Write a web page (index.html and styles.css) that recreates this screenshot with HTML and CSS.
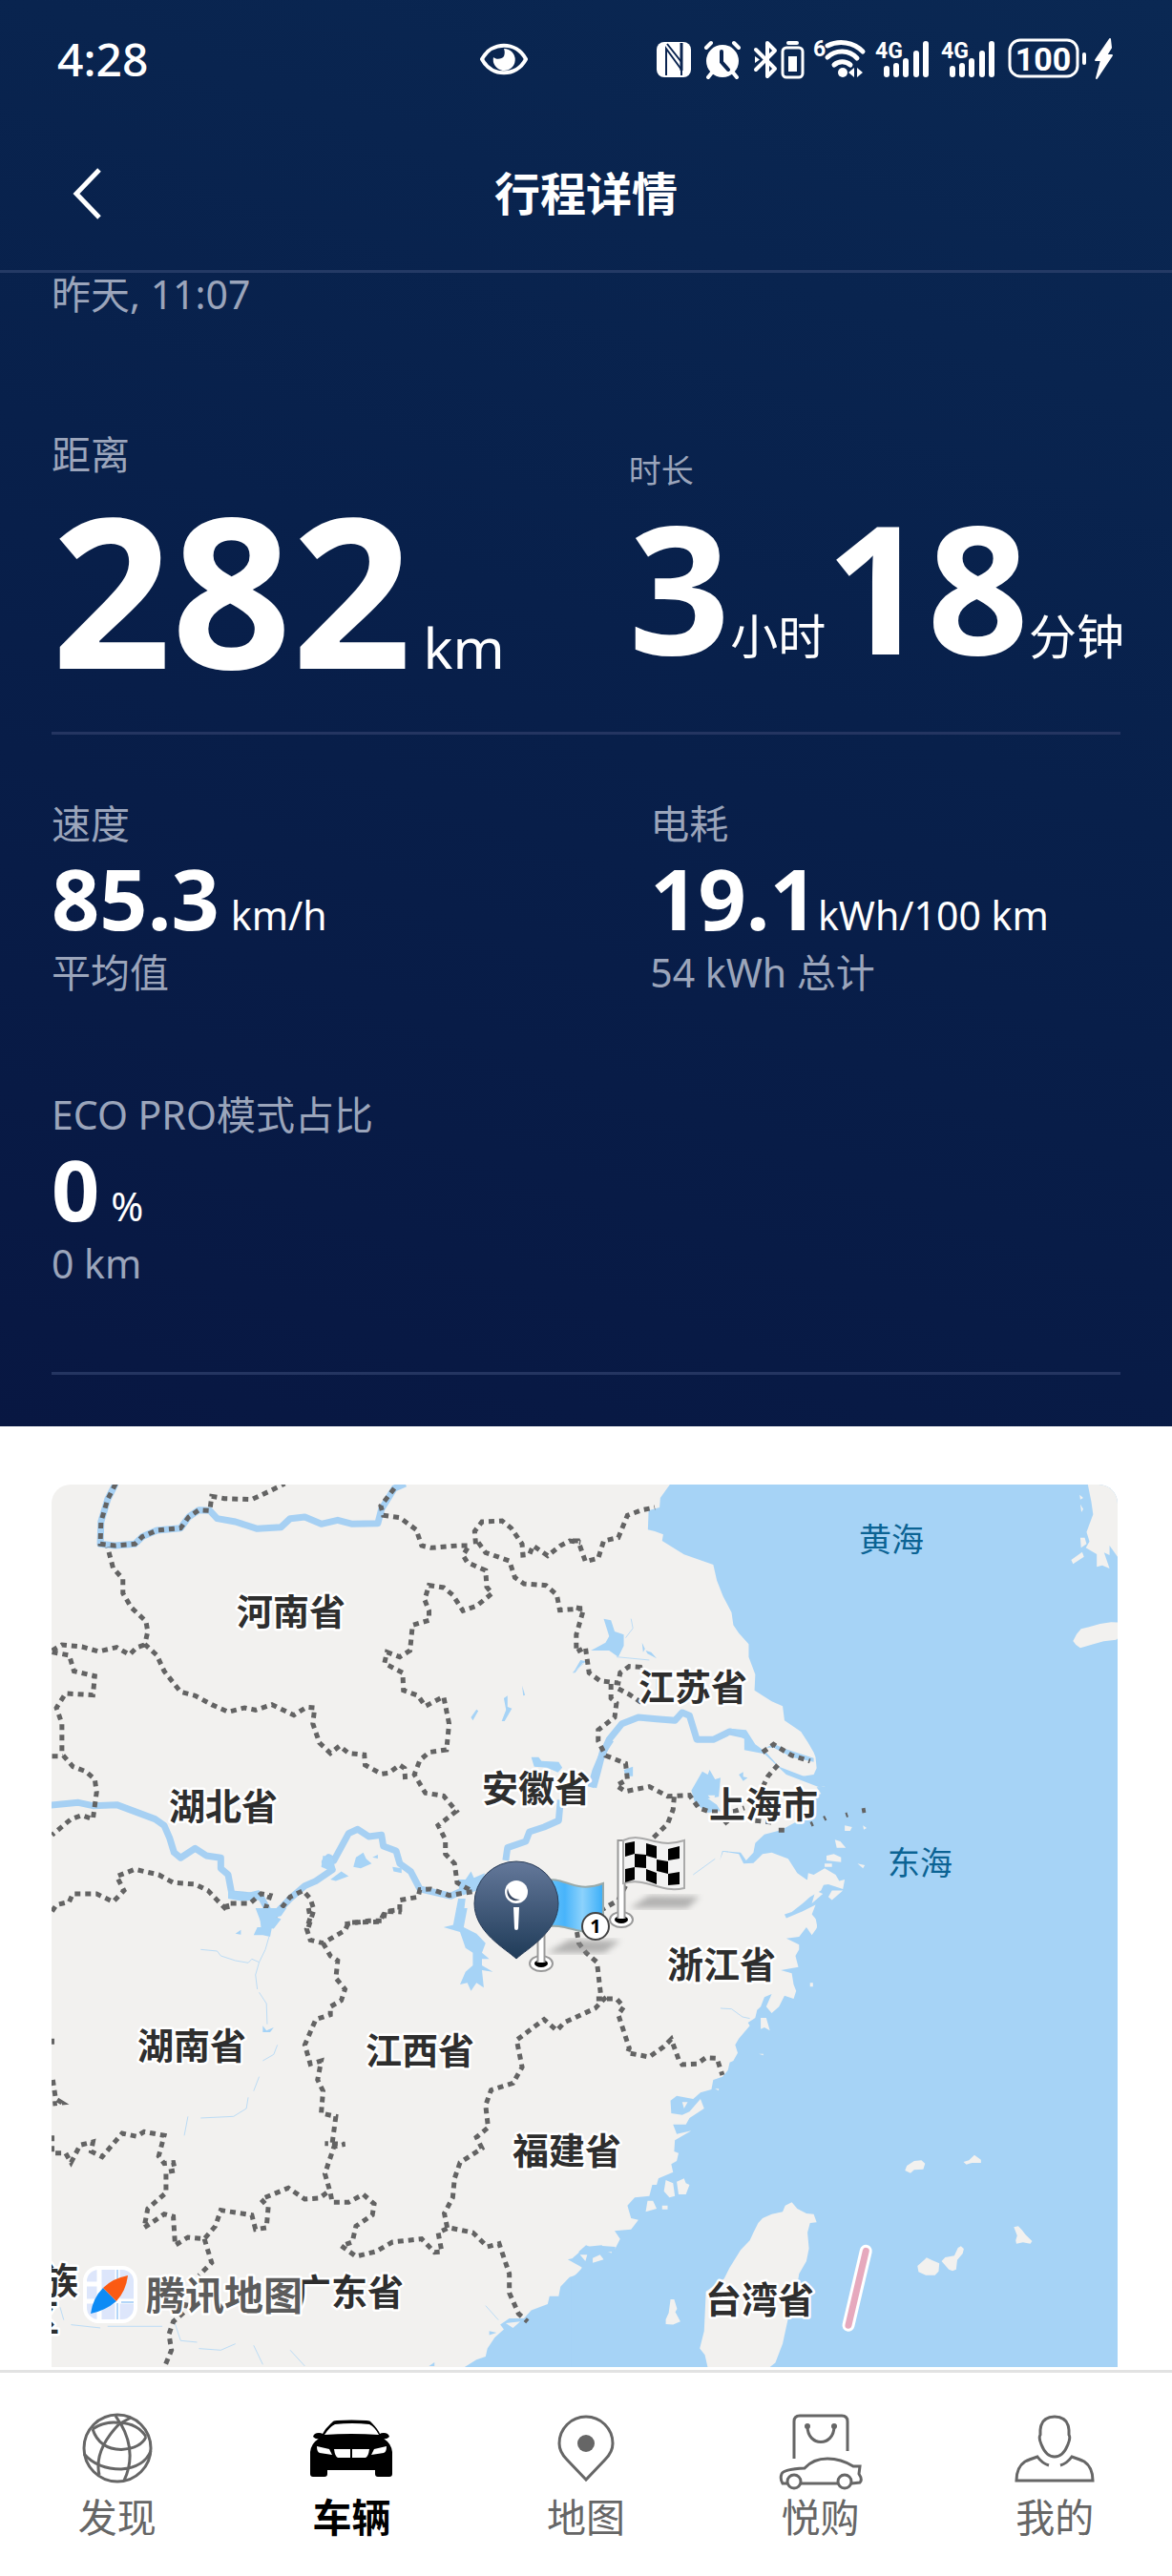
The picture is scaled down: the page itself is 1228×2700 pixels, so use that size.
FILE: index.html
```
<!DOCTYPE html>
<html lang="zh-CN">
  <head>
    <meta charset="utf-8">
    <meta name="viewport" content="width=device-width, initial-scale=1">
    <title>行程详情</title>
    <link rel="stylesheet" href="styles.css">
  </head>
  <body>
    <section class="trip">
      <div class="status-bar">
        <span class="clock">4:28</span>
        <svg class="eye" viewBox="0 0 50 36" width="50" height="36">
          <path d="M2 18C12-1 38-1 48 18 38 37 12 37 2 18z" fill="none" stroke="#fff" stroke-width="4"/>
          <path d="M25 7a11.500 11.500 0 1 1-11 9c3 3 9 2 11-1 1-3 1-5 0-8z" fill="#fff"/>
        </svg>
        <svg class="status-icons" viewBox="0 0 482 46" width="482" height="46">
          <!-- nfc -->
          <rect x="2" y="5" width="36" height="37" rx="8" fill="#fff"/>
          <path d="M12 40V12L28 34M13 7L28 26V40M28 7v27" fill="none" stroke="#0a2450" stroke-width="2"/>
          <path d="M28 6v29" stroke="#0a2450" stroke-width="3"/>
          <!-- alarm -->
          <circle cx="71" cy="25" r="17" fill="#fff"/>
          <path d="M54 11l5-5M88 11l-5-5M60 37l-4 5M82 37l4 5" stroke="#fff" stroke-width="4" stroke-linecap="round"/>
          <path d="M70 15v11l7 8" fill="none" stroke="#0a2450" stroke-width="4" stroke-linecap="round"/>
          <!-- bluetooth -->
          <path d="M106 13l20 20-8 8V6l8 8-20 20" fill="none" stroke="#fff" stroke-width="4" stroke-linejoin="round" stroke-linecap="round"/>
          <path d="M105 20l5 3.500-5 3.500z" fill="#fff"/>
          <rect x="134" y="11" width="21" height="31" rx="4" fill="none" stroke="#fff" stroke-width="3"/>
          <rect x="138" y="4" width="13" height="4" rx="2" fill="#fff"/>
          <rect x="140" y="20" width="9" height="16" fill="#fff"/>
          <!-- wifi -->
          <text class="net" x="166" y="20">6</text>
          <path d="M181 9a32 32 0 0 1 37 6M181 21a22 22 0 0 1 31 1M188 29a13 13 0 0 1 17 0" fill="none" stroke="#fff" stroke-width="5" stroke-linecap="round"/>
          <circle cx="197" cy="37" r="5" fill="#fff"/>
          <path d="M209 32v10l-6-5zM212 32v10l6-5z" fill="#fff"/>
          <!-- signal -->
          <text class="net" x="231" y="22">4G</text>
          <path d="M243 33v6M253 30v9M263 25v14M274 17v22M284 7v32" stroke="#fff" stroke-width="6" stroke-linecap="round"/>
          <text class="net" x="300" y="22">4G</text>
          <path d="M312 33v6M322 30v9M332 25v14M343 17v22M353 7v32" stroke="#fff" stroke-width="6" stroke-linecap="round"/>
          <!-- battery -->
          <rect x="372" y="3" width="71" height="38" rx="11" fill="none" stroke="#fff" stroke-width="3"/>
          <text class="charge" x="407" y="35">100</text>
          <path d="M450 18v9" stroke="#fff" stroke-width="4" stroke-linecap="round"/>
          <path d="M477 2l-15 22h6l-5 19 16-24h-6l5-8z" fill="#fff" stroke="#fff" stroke-width="2" stroke-linejoin="round"/>
        </svg>
      </div>

      <header class="title-bar">
        <button class="back" type="button" aria-label="返回">
          <svg viewBox="0 0 34 56" width="34" height="56">
            <path d="M30 3L6 28l24 25" fill="none" stroke="#fff" stroke-width="5"/>
          </svg>
        </button>
        <h1>行程详情</h1>
      </header>

      <div class="trip-body">
        <p class="date">昨天, 11:07</p>

        <div class="totals">
          <div class="metric distance">
            <h2>距离</h2>
            <p class="reading">282<span class="unit">km</span></p>
          </div>
          <div class="metric duration">
            <h2>时长</h2>
            <p class="reading">3<span class="unit">小时</span>18<span class="unit">分钟</span></p>
          </div>
        </div>

        <div class="details">
          <div class="metric">
            <h2>速度</h2>
            <p class="reading">85.3<span class="unit">km/h</span></p>
            <p class="note">平均值</p>
          </div>
          <div class="metric consumption">
            <h2>电耗</h2>
            <p class="reading">19.1<span class="unit">kWh/100 km</span></p>
            <p class="note">54 kWh 总计</p>
          </div>
          <div class="metric">
            <h2>ECO PRO模式占比</h2>
            <p class="reading">0<span class="unit">%</span></p>
            <p class="note">0 km</p>
          </div>
        </div>
      </div>
    </section>

    <main class="map">
      <svg viewBox="0 0 1117 925">
        <defs>
          <linearGradient id="pin" x1="0" y1="0" x2="0" y2="1">
            <stop offset="0" stop-color="#64789a"/>
            <stop offset="1" stop-color="#1f3b58"/>
          </linearGradient>
          <linearGradient id="blue-flag">
            <stop offset="0" stop-color="#6fc6f8"/>
            <stop offset=".35" stop-color="#48b4fb"/>
            <stop offset=".65" stop-color="#8cd2fc"/>
            <stop offset="1" stop-color="#3aaef8"/>
          </linearGradient>
          <filter id="soft"><feGaussianBlur stdDeviation="3"/></filter>
        </defs>

        <!-- north west -->
        <g transform="translate(-14 -16) scale(.3827 .3333)">
          <path class="river" d="M212 45L190 95 172 165 170 235 210 240 265 235 285 212 325 192 390 185 412 150 440 128 470 130 490 155 540 165 600 187 665 182 690 155 730 150 775 172 820 160 860 172 930 170 940 125 975 60 1005 45"/>
          <path class="river" d="M30 1057L110 1048 150 1058 215 1055 320 1100 345 1120 360 1160 372 1205 390 1222 430 1192 460 1215 500 1222 500 1255 520 1275 530 1335 560 1338 610 1345 640 1410 690 1350 730 1310 760 1295 805 1260 785 1235 795 1220 810 1230 850 1145 875 1132 905 1155 940 1150 945 1185 980 1200 990 1240 1020 1265 1045 1320 1130 1342 1190 1310 1215 1285"/>
          <path class="river" d="M1280 1230L1285 1190 1335 1170 1345 1140 1385 1125 1425 1105 1430 1040M1520 1000L1532 950 1545 890 1568 850"/>
          <path class="lake" d="M1350 905l20 0 8 12 47 3 10 18-12 15-30-15-35-3zM520 1325l50 8 35-10 10 30-60 5-35-8zM780 1215l25 5 10 40-20 0-20-10zM605 1390l30 10 30 15-20 30-35-5zM1150 1290l20 0 15-25 8 20 30-15-10 50-50 20-10-20zM1150 1350l20 0-10 95-25-5z"/>
          <path class="lake" d="M1185 780l15-25 5 5-15 30zM1275 720l10-8 0 35 12 5-20 40-8 0 12-35zM1325 680l8 30-5 2zM870 1220l20-15 8 20 15 15-30 15-20-5zM915 1220l15-8 0 12zM800 1290l30-25 20 15-35 15zM970 1250l25 5 0 15-22-5zM1465 640l20-40 20 5-15 5-20 30z"/>
          <path class="border" d="M212 45L190 95 172 165 170 235 210 240 265 235 285 212 325 192 390 185 412 150 440 128 470 130 475 85 510 92 585 95 635 68 675 45"/>
          <path class="border" d="M975 60L938 115 945 145 990 152 1035 190 1050 240 1075 247 1150 240 1180 240 1163 270 1175 293 1225 318 1228 370 1243 390 1200 430 1163 445 1135 395 1110 372 1070 365 1058 410 1070 445 1070 475 1025 490 1018 570 990 590 955 575 948 610 998 640 1000 695 1040 712 1060 745 1110 715 1125 800 1118 882 1070 890 1045 915 1030 960 1060 1018 1110 1027 1145 1075 1095 1120 1115 1165 1115 1210 1140 1240 1147 1300 1190 1328 1125 1340 1075 1320 1045 1322 1040 1345 990 1355 990 1385 950 1390 945 1420 905 1420 840 1430"/>
          <path class="border" d="M1005 975L1003 940 990 930 960 955 940 958 895 930 893 898 850 893 825 870 800 893 770 860 752 800 757 750 735 748 700 773 640 740 595 757 565 750 520 763 475 740 430 712 390 700 345 635 325 585 292 550 300 510 295 478 255 435 232 390 232 345 205 310 190 245"/>
          <path class="border" d="M1198 235L1195 195 1215 165 1270 162 1295 185 1325 235 1327 270 1345 268 1355 240 1395 272 1430 240 1455 225 1485 230"/>
          <path class="border" d="M1205 230L1225 262 1290 288 1305 340 1330 360 1390 365 1420 395 1428 443 1490 438"/>
          <path class="border" d="M38 570L65 552 120 558 165 573 215 560 250 583 270 560 292 552M38 575L85 585 98 635 155 650 150 710 75 705 50 750 65 800 65 895 95 935 130 950 155 975 160 1015 150 1100 120 1088 90 1100 38 1150M38 902h30"/>
          <path class="border" d="M38 1390L50 1370 85 1360 95 1335 160 1335 205 1360 235 1325 215 1280 265 1258 330 1275 370 1300 430 1305 465 1325 490 1355 520 1390 515 1365 580 1365 610 1335 635 1340 620 1390 645 1410 690 1345 725 1325 745 1350 755 1385 740 1440"/>
        </g>

        <!-- north east -->
        <g transform="translate(546 -16) scale(.3827 .3333)">
          <path class="sea" d="M268 45L240 90 238 120 208 130 206 190 225 195 248 205 245 225 305 268 385 300 395 350 412 400 435 450 440 490 455 515 482 550 482 590 500 645 498 695 545 730 575 745 580 790 625 825 645 860 660 890 665 905 668 940 660 960 630 965 692 998 668 1000 680 1020 662 1030 665 1060 650 1095 610 1110 570 1135 525 1148 500 1175 495 1205 475 1230 460 1205 410 1200 403 1230 412 1202 455 1210 468 1240 495 1238 520 1210 545 1205 590 1225 615 1270 640 1290 690 1300 680 1325 650 1345 630 1365 600 1392 580 1400 585 1412 630 1390 665 1370 655 1400 670 1420 668 1450 1500 1450 1500 45z"/>
          <path class="river" d="M50 1000L62 950 80 900 100 850 135 800 180 780 230 785 280 790 300 765 320 775 340 850 385 850 430 825 470 835"/>
          <path class="lake" d="M430 815l45 5 25 45 30 25 35 45 90 40 40 22-20 3-90-40-60-65-55-12 0-35-35-25zM530 875l20-12 30 15 80 30 0 12-60-15-50-30z"/>
          <path class="lake" d="M375 945l-5 15-15-10-30 60 10 40 35 30 35-5-10-20-25-20 30-5 5-60-15 5zM85 470l20 5 10 35 25 10 0 35-15 35-25-20-50 0 40-25 10-20zM190 545l8 20-5 10zM200 570l15 5 15 20-25-15zM140 945l25-10 0 30-20 0zM455 960l12-8 0 15 12 3-12 10z"/>
          <path class="stream" d="M120 590l90 10M145 530l20-30-5-30M0 640l30-30M215 650l15-5 0 50M330 1275l60-50"/>
          <path class="land" d="M1410 45h95v230l-10 5-25-40 0 30-15-8 15 50-20-10-15 5 0-40-30-20 10-20-8-30 18-55-5-40zM1365 285l30-25 5 15-30 23zM1390 110l8 15-5 10zM1388 80l10 10-8 5zM1390 215l12 0 5 20-15 12z"/>
          <path class="land" d="M1370 540l10-22 12-16 22-6 30-10 30-5 32 1 0 40-18 14-34 5-28 9-36 12-12-10z"/>
          <path class="land" d="M645 1270l15 5 30-20 30 20 10 20 15-5-5 30-40-15-60 10zM695 1215l20-5 20 10 0 15-40-5zM718 1165l15 5 15 20-25 0zM745 1120l20 5-5 12-15 0zM710 1325l30 0-30 30-10-10zM690 1240l20 0 0 10-20 0zM665 1325l20 10-30 30zM795 1120l10 8-8 5zM780 1240l20 5-5 10zM370 1025l20 0-5 20z"/>
          <path class="border" d="M0 225L15 225 35 290 70 280 85 225 125 215 150 145 190 128 225 120M10 435L30 440 10 520 10 575 35 560 45 640 75 665 125 672 130 640 155 620 185 622 190 640"/>
          <path class="border" d="M105 675L105 720 120 735 115 780 70 820 70 855 90 900 145 925 150 975 120 995 145 1013 210 998 260 1028 320 1025 345 1065 375 1077 440 1077 470 1065M125 690L155 708 190 735"/>
          <path class="border" d="M278 1030L275 1070 260 1115 215 1165M145 1310L125 1355 80 1385M520 890L550 865 600 900 650 918M562 930L535 965 520 1000M415 1115l10-10M500 1105l45 5"/>
          <path class="border" d="M564 1135h16M652 1117l6-3M688 1099l5-3M748 1088l5-2M792 1074l10-2"/>
        </g>

        <!-- south west -->
        <g transform="translate(-14 444) scale(.3827 .3333)">
          <path class="sea" d="M1580 1065L1545 1062 1530 1075 1500 1060 1480 1080 1485 1095 1450 1105 1490 1130 1470 1155 1455 1160 1430 1190 1425 1220 1400 1220 1395 1245 1350 1265 1330 1290 1290 1290 1265 1310 1275 1325 1250 1350 1230 1385 1225 1410 1200 1420 1165 1445 1580 1445z"/>
          <path class="land" d="M1495 1095l20-20 10 15 20-12 0 20-40 15zM1280 1305l40-5-20 20zM1550 1085l20-5 0 15z"/>
          <path class="lake" d="M1110 60l35-10 5-20-5-30 30 0-10 60 35 20 25 30-10 30 20 20-20 0 0 20 30 20-30-5 5 55-20-15-15 25-10-25-20 5 15-40 20-20 0-40-20-15-15-50zM595 0l85 0-15 25-20 5-10 60-20-5-25 0 10-25 15 0zM540 80l15-12 0 15zM615 370l10 15 20-10-10 15-20 0zM1235 1330l20 5-20 8zM1070 1440l15-12 0 12z"/>
          <path class="stream" d="M632 90L622 130 605 170 595 210 600 255M605 170L585 160 575 172 540 165 500 150 490 135 445 130M605 265l20 35 2 65M655 430l-10 30-30 20M605 530l-15 45M575 595l-5 35-35 25-90 5M410 655l-10 60M60 1255l10 40M90 1310l80 10M190 1315l150 0M370 1290l20 70 45 5M440 1385l60 5 40-20M590 1375l25 60M690 1390l40 50M1225 1250l35 45"/>
          <path class="border" d="M740 0L745 30 735 65 745 100 780 110 840 70 850 45 935 43 950 10 995 12M780 110L800 150 820 165 815 220 840 255 830 290 800 310 800 335 760 350 730 430 745 490 775 480 765 540 780 575 775 645 815 655 805 740 785 740 840 742 810 750 785 835 800 895 805 925 850 925 890 900 920 930 915 965 870 1000 860 1050 830 1062 870 1095 925 1080 970 1050 1050 1040 1085 1082 1105 1080 1095 1020 1125 1005 1190 1020 1230 1065 1262 1055 1290 1150 1290 1210 1315 1275 1340 1300"/>
          <path class="border" d="M790 895L770 912 730 915 685 880 610 915 630 940 625 1005 595 1010 585 965 500 950 485 1000 455 1040 410 1035 375 1060 370 970 345 962 310 990 290 1005 300 945 350 895 350 830 375 825 370 800 345 803 330 780 345 715 290 703 270 718 230 708 175 782 145 765 150 735 115 745 90 800 75 770 38 770 38 710"/>
          <path class="border" d="M455 1040L475 1115 440 1155M405 1240L400 1270 370 1300 358 1340 365 1390 345 1445M38 410v20M40 540L48 600 65 612 40 615"/>
          <path class="border" d="M1475 75L1480 110 1500 140 1530 170 1540 270 1550 285 1525 315 1440 360 1420 385 1385 350 1310 415 1325 500 1300 550 1240 572 1225 620 1232 690 1200 720 1215 755 1155 800 1140 850 1135 910 1112 960 1120 1005"/>
        </g>

        <!-- south east -->
        <g transform="translate(546 444) scale(.3827 .3333)">
          <path class="sea" d="M668 -2L665 30 670 60 655 85 640 60 620 90 585 95 620 115 620 130 610 150 618 185 570 195 600 205 605 240 612 260 605 285 580 275 565 310 545 330 530 310 545 270 525 280 515 310 505 320 500 345 480 360 485 370 455 410 445 430 452 455 440 480 430 485 425 510 410 530 385 540 380 570 350 580 330 600 285 590 268 605 270 645 300 650 320 640 350 600 360 630 320 660 310 680 275 680 285 710 325 700 280 730 278 765 290 770 285 795 270 805 275 830 235 850 230 870 218 870 210 905 170 910 150 935 160 975 180 980 160 1010 115 1015 130 1040 110 1085 90 1080 80 1060 35 1065 0 1100 25 1120 25 1140 -4 1162 -4 1445 1500 1445 1500 -2z"/>
          <path class="land" d="M255 855l20 10 5 40-15 5-15-20zM285 860l20-10 5 15 10 5-10 30-20 0zM205 920l15 0 10 25-30 10zM245 935l15 0 0 12-15 0zM300 610l15 0-10 20zM515 345l15 0 10 40-15-10-10 5zM650 235l8 0 0 12-8 0zM20 1090l20 0-5 20zM55 1100l20-10 10 15-30 10zM510 458l12 0 0 5zM390 568l10 0 0 6z"/>
          <path class="land" d="M600 925L582 935 575 955 545 962 520 975 508 990 495 1020 485 1045 460 1075 430 1130 415 1165 365 1205 360 1330 348 1385 362 1405 370 1445 538 1445 555 1430 575 1370 590 1290 610 1220 620 1150 640 1110 647 1070 643 1020 650 990 668 988 660 962 640 960 615 945z"/>
          <path class="land" d="M268 1230l10 0 8 30-5 10 14 30-20 10-20-2 0-15 8-20zM910 825l5-15 20-15 20-2 10 10-5 18-25 2-10 10zM1070 798l15-5 15-17 18 15 0 10-25 0-15 5zM944 1125l20-20 5-6 15 8 20 10-2 25-10 12-25 0-20-10zM1010 1110l10-12 25-5 10-25 8-5 8 8-3 15-15 20-3 30-10 5-10-5zM1208 1003l12-3 10 12 10 15 18 20-5 8-20-4-18 4-2-10 4-15z"/>
          <path class="stream" d="M405 315l30 2 30 25 20 5"/>
          <path class="border" d="M65 285L70 285 120 285 140 310 125 335 155 440 150 455 210 468 250 435 270 412 290 475 300 492 340 490 365 470 395 472 410 525"/>
          <path class="strait-halo" d="M803 1078L755 1312"/>
          <path class="strait" d="M803 1078L755 1312"/>
        </g>

        <g class="provinces">
          <text x="251" y="147">河南省</text>
          <text x="180" y="351">湖北省</text>
          <text x="508" y="332">安徽省</text>
          <text x="672" y="226">江苏省</text>
          <text x="746" y="349">上海市</text>
          <text x="147" y="602">湖南省</text>
          <text x="386" y="607">江西省</text>
          <text x="540" y="712">福建省</text>
          <text x="702" y="517">浙江省</text>
          <text x="312" y="860">广东省</text>
          <text x="742" y="868">台湾省</text>
          <text x="9" y="848">族</text>
          <text x="-11" y="887">区</text>
        </g>
        <g class="seas">
          <text x="880" y="70">黄海</text>
          <text x="910" y="409">东海</text>
        </g>

        <!-- map provider -->
        <rect x="35" y="821" width="53" height="56" rx="14" fill="#dde6fb" stroke="#fff" stroke-width="4"/>
        <path d="M50 823v52M37 856h49M69 823v52M37 838h14" stroke="#fff" stroke-width="5"/>
        <path d="M69 823v30M69 858v17M73 857h13" stroke="#b3d6f8" stroke-width="2"/>
        <path d="M41 869q2-16 13-27l14 14q-12 10-27 13z" fill="#0d8bf5"/>
        <path d="M80 829q-16 3-26 13l14 14q10-11 12-27z" fill="#fb5a13"/>
        <text class="provider" x="99" y="865">腾讯地图</text>

        <!-- stopover flag -->
        <path d="M519 491l24-14 53 1-17 13z" fill="#888" opacity=".6" filter="url(#soft)"/>
        <ellipse cx="513" cy="502" rx="12" ry="8" fill="#fff" stroke="#999" stroke-width="2"/>
        <ellipse cx="513" cy="502" rx="7" ry="4"/>
        <path d="M513 410v91" stroke="#999" stroke-width="9"/>
        <path d="M513 410v91" stroke="#fff" stroke-width="5"/>
        <path d="M516 416c20-8 30 14 62 2v50c-24 6-40-10-62-4z" fill="url(#blue-flag)" stroke="#9aa" stroke-width="2"/>
        <circle cx="570" cy="463" r="14" fill="#fff" stroke="#444" stroke-width="2"/>
        <text class="stop" x="570" y="470">1</text>

        <!-- finish flag -->
        <path d="M606 444l20-13 53 1-13 12z" fill="#888" opacity=".6" filter="url(#soft)"/>
        <ellipse cx="597" cy="456" rx="12" ry="8" fill="#fff" stroke="#999" stroke-width="2"/>
        <ellipse cx="597" cy="456" rx="7" ry="4"/>
        <path d="M597 372v83" stroke="#999" stroke-width="9"/>
        <path d="M597 374v81" stroke="#fff" stroke-width="5"/>
        <path d="M599 373c22-10 34 10 64 0v50c-26 6-38-12-64-5z" fill="#f2f2f2" stroke="#aaa" stroke-width="2"/>
        <path d="M601 376l10-2v13l-10 3zM623 376l11 3v13l-11-3zM646 382l12-3v13l-12 2zM611 387l12 1v14l-12-1zM634 393l12 2v13l-12-3zM601 403l10-2v13l-10 3zM623 403l11 4v12l-11-4zM646 408l12-2v13l-12 1z"/>

        <!-- current place -->
        <path d="M487 497c-12-11-44-28-44-58a44 44 0 0 1 88 0c0 30-32 47-44 58z" fill="url(#pin)" stroke="#2a3d58" stroke-width="1"/>
        <circle cx="487" cy="427" r="12" fill="#fff"/>
        <path d="M478 423c1 8 6 12 13 12-8 4-16-3-13-12z" fill="#3a4a64"/>
        <path d="M484 443h6l-1 22a2 2 0 0 1-4 0z" fill="#fff"/>
      </svg>
    </main>

    <nav class="tabs">
      <a href="#discover">
        <svg viewBox="0 0 90 84" width="90" height="84">
          <circle cx="45" cy="38" r="35"/>
          <path d="M19 18Q32 9 48 11.500 66 12 75 26M19 18Q26 39 49 39.500 70 38 75 26M10 44Q24 60 49 60 73 58 80 41M48 11.500Q20 40 26 66M48 11.500Q66 42 52 72M43 4l5 8 11-6"/>
        </svg>
        发现
      </a>
      <a href="#vehicle" class="current">
        <svg viewBox="0 0 90 84" width="90" height="84">
          <path fill-rule="evenodd" d="M25 11q1-2 5-2 15-1 31 0 4 0 5 2 7 7 9 12 1-1 4-1 5 0 6 4-3 3-6 2 8 5 9 14v23q0 3-3 3H73q-3 0-3-3v-4H20v4q0 3-3 3H5q-3 0-3-3V42q1-9 9-14-3 1-6-2 1-4 6-4 3 0 4 1 3-6 10-12zM28 13q-6 3-11 11 28-2 57 0-4-8-10-11-18-2-36 0zM9 36q0 6 3 7l13 2-3-6zM82 36q0 6-3 7l-13 2 3-6zM27 39q1 8 4 9h13v-9zM64 39q-1 8-4 9H46v-9z"/>
        </svg>
        车辆
      </a>
      <a href="#map">
        <svg viewBox="0 0 90 84" width="90" height="84">
          <path d="M45 71L25 50C20 45 17 39 17 33a28 28 0 0 1 56 0c0 6-3 12-8 17z"/>
          <circle class="solid" cx="45" cy="33" r="9"/>
        </svg>
        地图
      </a>
      <a href="#shop">
        <svg viewBox="0 0 90 84" width="90" height="84">
          <path d="M17 49V10q0-6 6-6h44q6 0 6 6v31M31 15c0 22 28 22 28 0"/>
          <circle class="solid" cx="31" cy="15" r="3"/>
          <circle class="solid" cx="59" cy="15" r="3"/>
          <path d="M10 75H5q-3-5-1-10 2-5 24-6 9-10 24-10 14 0 27 8h7l-1 8q4 6 1 9l-9 1M24 75h39"/>
          <circle cx="17" cy="73" r="7"/>
          <circle cx="70" cy="73" r="7"/>
        </svg>
        悦购
      </a>
      <a href="#mine">
        <svg viewBox="0 0 90 84" width="90" height="84">
          <path d="M45 5q14 0 15 14v5q2 3-1 10-5 13-14 13t-14-13q-3-7-1-10v-5Q31 5 45 5z"/>
          <path d="M39 56q-7-2-12-9-9 3-13 5-9 6-9 20h80q0-14-9-20-4-2-13-5-5 7-12 9"/>
        </svg>
        我的
      </a>
    </nav>
  </body>
</html>
```
FILE: styles.css
```
* {
  box-sizing: border-box;
}
body {
  margin: 0;
  background: #fff;
  font-family: "Noto Sans", "Noto Sans CJK SC", sans-serif;
}
h1,
h2,
p {
  margin: 0;
}

/* trip summary */
.trip {
  background: linear-gradient(200deg, #0a2853 0%, #08204b 45%, #081742 100%);
  color: #fff;
}
.status-bar {
  display: grid;
  grid-template-columns: 443px 1fr auto;
  align-items: center;
  height: 123px;
  padding: 0 60px;
}
.clock {
  font-size: 48px;
  font-weight: 500;
  line-height: 56px;
}
.status-icons {
  fill: #fff;
}
.net {
  font: bold 23px Roboto, sans-serif;
}
.charge {
  font: bold 34px Roboto, sans-serif;
  text-anchor: middle;
}
.title-bar {
  display: grid;
  grid-template-columns: 1fr auto 1fr;
  align-items: center;
  height: 163px;
  padding: 0 54px;
  border-bottom: 3px solid #243a65;
}
.title-bar h1 {
  font-size: 48px;
  line-height: 64px;
}
.back {
  display: flex;
  justify-self: start;
  padding: 0 20px;
  border: 0;
  background: none;
}
.trip-body {
  padding: 0 54px 54px;
}
.date,
.metric h2,
.note {
  color: #9ba5bb;
  font-size: 41px;
  font-weight: 400;
  line-height: 56px;
}
.date {
  line-height: 44px;
}
.metric {
  display: flex;
  flex-direction: column;
  gap: 6px;
}
.reading {
  display: flex;
  align-items: baseline;
  gap: 12px;
  font-size: 88px;
  font-weight: 700;
  line-height: 88px;
  white-space: nowrap;
}
.unit {
  font-size: 41px;
  font-weight: 400;
  line-height: 1;
}
.totals {
  display: grid;
  grid-template-columns: 54% 46%;
  padding: 118px 0 51px;
  border-bottom: 3px solid #243561;
}
.totals .metric {
  gap: 12px;
}
.distance .reading {
  font-size: 220px;
  line-height: 200px;
}
.distance .unit {
  font-size: 58px;
}
.duration {
  margin-top: 21px;
}
.metric.duration h2 {
  font-size: 34px;
  line-height: 48px;
}
.duration .reading {
  gap: 0;
  font-size: 186px;
  line-height: 170px;
}
.duration .unit {
  font-size: 50px;
}
.details {
  display: grid;
  grid-template-columns: 56% 44%;
  row-gap: 93px;
  padding: 65px 0 86px;
  border-bottom: 3px solid #243561;
}
.consumption .reading {
  gap: 0;
}

/* route map */
.map {
  padding: 61px 57px 3px 54px;
}
.map svg {
  display: block;
  width: 100%;
  border-radius: 20px 20px 0 0;
  background: #f2f1ef;
}
.sea,
.lake {
  fill: #a6d3f6;
}
.land {
  fill: #f2f1ef;
}
.river,
.stream,
.border,
.strait,
.strait-halo {
  fill: none;
  vector-effect: non-scaling-stroke;
}
.river {
  stroke: #a6d0f3;
  stroke-width: 7px;
  stroke-linejoin: round;
}
.stream {
  stroke: #bcdcf5;
  stroke-width: 1px;
}
.border {
  stroke: #636363;
  stroke-width: 5px;
  stroke-dasharray: 6 5;
}
.strait-halo {
  stroke: #fff;
  stroke-width: 13px;
  stroke-linecap: round;
}
.strait {
  stroke: #e6a9bd;
  stroke-width: 7px;
  stroke-linecap: round;
}
.provinces,
.seas {
  font-family: "Noto Sans CJK SC", sans-serif;
  text-anchor: middle;
}
.provinces,
.provider {
  paint-order: stroke;
  stroke: #fff;
  stroke-width: 5px;
  stroke-linejoin: round;
}
.provinces {
  fill: #2e2e2e;
  font-size: 38px;
  font-weight: 700;
}
.seas {
  fill: #0b6394;
  font-size: 34px;
}
.provider {
  fill: #5c5c5c;
  font-family: "Noto Sans CJK SC", sans-serif;
  font-size: 41px;
  font-weight: 700;
}
.stop {
  font-size: 20px;
  font-weight: 700;
  text-anchor: middle;
}

/* tab bar */
.tabs {
  display: grid;
  grid-template-columns: repeat(5, 1fr);
  height: 216px;
  padding-top: 41px;
  border-top: 3px solid #e2e2e2;
}
.tabs a {
  display: flex;
  flex-direction: column;
  align-items: center;
  color: #666;
  font-size: 41px;
  line-height: 52px;
  text-decoration: none;
}
.tabs svg {
  fill: none;
  stroke: currentColor;
  stroke-width: 3px;
}
.tabs .solid {
  fill: currentColor;
  stroke: none;
}
.tabs .current {
  color: #000;
  font-weight: 700;
}
.tabs .current svg {
  fill: currentColor;
  stroke: none;
}
```
